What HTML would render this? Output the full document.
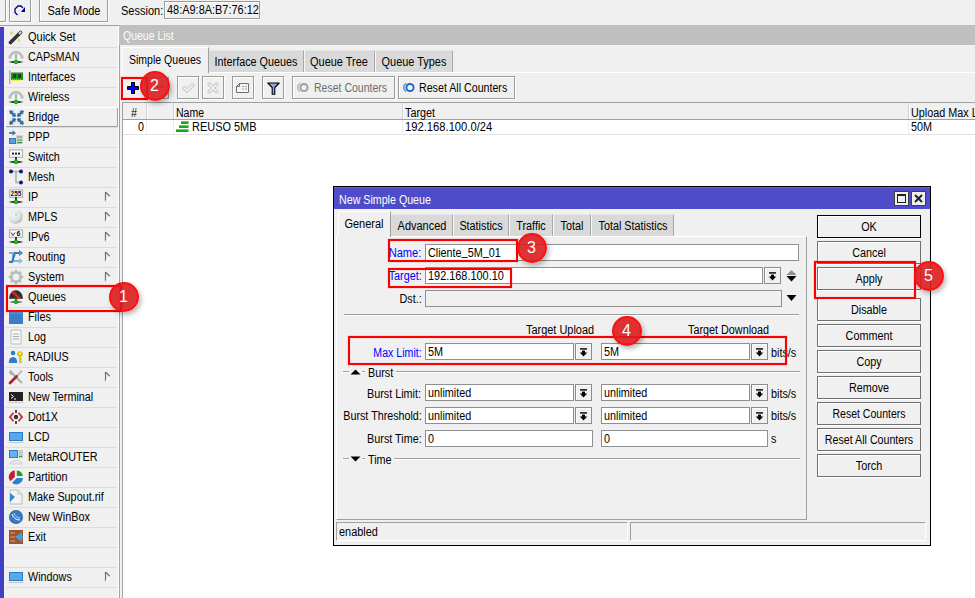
<!DOCTYPE html><html><head><meta charset="utf-8"><style>*{box-sizing:border-box;margin:0;padding:0}
html,body{width:975px;height:598px;overflow:hidden;background:#f0f0f0;font-family:"Liberation Sans",sans-serif;font-size:12px;color:#000;position:relative}
.a{position:absolute}
.x{position:absolute;white-space:nowrap;line-height:13px;font-size:12px;z-index:3}
.btn{position:absolute;border:1px solid #9c9c9c;background:#f0f0f0;box-shadow:inset 1px 1px 0 #fff,1px 1px 0 #fff}
.strip{position:absolute;left:0;top:27px;width:4px;height:571px;background:#4040c0}
.si{position:absolute;left:5px;width:113px;height:20px}
.si:after{content:"";position:absolute;left:1px;right:1px;bottom:-1px;height:1px;background:#dcdcdc}
.si svg{position:absolute;left:3px;top:2px;width:16px;height:16px}
.si svg.arr{position:absolute;left:99px;top:4px;width:8px;height:12px}
.si.hl{border-top:1px solid #fff;border-left:1px solid #fff;box-shadow:inset 0 -1px 0 #a0a0a0, inset -1px 0 0 #a0a0a0}
.si.hl svg{left:2px;top:1px}
.tab{position:absolute;background:#d9d9d9;border-top:1px solid #e4e4e4;border-right:1px solid #a8a8a8}
.tab.gap{border-left:1px solid #f6f6f6}
.tab.act{background:#f0f0f0;border-top:1px solid #fff;border-left:1px solid #fff;border-right:1px solid #a0a0a0;z-index:2}
.fld{position:absolute;background:#fff;border:1px solid #8f8f8f;height:17px}
.fld.dis{background:#f0f0f0}
.dd{position:absolute;width:17px;height:17px;border:1px solid #8c8c8c;background:#f0f0f0;box-shadow:inset 1px 1px 0 #fff}
.dd svg{position:absolute;left:0;top:0}
.dbtn{position:absolute;left:817px;width:104px;height:23px;border:1px solid #707070;background:#f0f0f0;box-shadow:inset 1px 1px 0 #fff,0 1px 0 #fff}
.red{position:absolute;border:2px solid #fa0000;box-shadow:0 0 1px rgba(255,0,0,.55),inset 0 0 1px rgba(255,0,0,.55);z-index:9}
.badge{position:absolute;width:30px;height:30px;border-radius:50%;background:rgba(218,28,30,.9);border:2px solid #ff0f0f;color:#fff;font-size:16px;line-height:25px;text-align:center;box-shadow:2px 3px 5px rgba(0,0,0,.28);z-index:10}
.grp{position:absolute;height:1px;background:#a0a0a0;box-shadow:0 1px 0 #fff}
</style></head><body>
<div class="btn" style="left:-20px;top:-2px;width:26px;height:24px"></div>
<div class="btn" style="left:9px;top:-2px;width:22px;height:24px"></div>
<svg class="a" style="left:13px;top:4px" width="14" height="12" viewBox="0 0 14 12"><path d="M4.5 11 L2 8.5 L2 5 L5 2 L8 2 L10 4" fill="none" stroke="#000090" stroke-width="1.3"/><path d="M12 3 L12 8 L8 8 Z" fill="#000090"/></svg>
<div class="btn" style="left:39px;top:-2px;width:69px;height:24px"></div>
<div class="x" style="top:5px;left:-76.25px;width:300px;text-align:center;transform:scaleX(0.912);transform-origin:50% 0;">Safe Mode</div>
<div class="x" style="top:5px;left:120.5px;transform:scaleX(0.919);transform-origin:0 0;">Session:</div>
<div class="a" style="left:164px;top:1px;width:96px;height:18px;border:1px solid #9a9a9a;background:#f0f0f0;box-shadow:inset 1px 1px 0 #fff,0 1px 0 #fff"></div>
<div class="x" style="top:4px;left:166.5px;transform:scaleX(0.912);transform-origin:0 0;">48:A9:8A:B7:76:12</div>
<div class="a" style="left:0px;top:25px;width:119px;height:1px;background:#a0a0a0"></div>
<div class="strip"></div>
<div class="si" style="top:27px"><svg viewBox="0 0 16 16"><path d="M2.5 13.5 L12.5 3.5" stroke="#333" stroke-width="3.6" stroke-linecap="round"/><path d="M11 5 L13.2 2.8" stroke="#d0d0d0" stroke-width="2.2"/><path d="M3.5 1.5 L4.3 3.4 L6.2 4 L4.3 4.7 L3.5 6.6 L2.8 4.7 L0.9 4 L2.8 3.4Z" fill="#e3e020"/><circle cx="11" cy="11.5" r="1.2" fill="#e3e020"/></svg></div>
<div class="x" style="top:31px;left:27.5px;transform:scaleX(0.916);transform-origin:0 0;">Quick Set</div>
<div class="si" style="top:47px"><svg viewBox="0 0 16 16"><path d="M1.7 9.5 A6.3 6.3 0 0 1 14.3 9.5" fill="none" stroke="#b4bdb8" stroke-width="2.6"/><rect x="7.2" y="5" width="1.6" height="7" fill="#9aa8a2"/><path d="M0.5 13 Q8 11.2 15.5 13 Q8 14.8 0.5 13Z" fill="#111"/><circle cx="8" cy="13" r="2.2" fill="#19b019"/></svg></div>
<div class="x" style="top:51px;left:27.5px;transform:scaleX(0.9);transform-origin:0 0;">CAPsMAN</div>
<div class="si" style="top:67px"><svg viewBox="0 0 16 16"><rect x="1" y="1" width="1.5" height="14" fill="#a8b4ae"/><rect x="3" y="3.5" width="12" height="7.5" fill="#139a13"/><rect x="5" y="5" width="3" height="4" fill="#333"/><rect x="10" y="5" width="3" height="4" fill="#333"/><path d="M4 11 h10" stroke="#e0d000" stroke-width="1.4" stroke-dasharray="1 1"/></svg></div>
<div class="x" style="top:71px;left:27.5px;transform:scaleX(0.9);transform-origin:0 0;">Interfaces</div>
<div class="si" style="top:87px"><svg viewBox="0 0 16 16"><path d="M1.7 9.5 A6.3 6.3 0 0 1 14.3 9.5" fill="none" stroke="#b4bdb8" stroke-width="2.6"/><rect x="7.2" y="5" width="1.6" height="7" fill="#9aa8a2"/><path d="M0.5 13 Q8 11.2 15.5 13 Q8 14.8 0.5 13Z" fill="#111"/><circle cx="8" cy="13" r="2.2" fill="#19b019"/></svg></div>
<div class="x" style="top:91px;left:27.5px;transform:scaleX(0.9);transform-origin:0 0;">Wireless</div>
<div class="si hl" style="top:107px"><svg viewBox="0 0 16 16"><g transform="translate(0.8 0.8)"><path d="M1 1 L6.6 6.6" stroke="#3a6e9e" stroke-width="2.4" stroke-linecap="butt"/><path d="M1 1 L5 1 L1 5Z" fill="#3a6e9e"/><path d="M6.6 6.6 L2.5999999999999996 6.6 L6.6 2.5999999999999996Z" fill="#3a6e9e"/><path d="M14.4 1 L8.8 6.6" stroke="#3a6e9e" stroke-width="2.4" stroke-linecap="butt"/><path d="M14.4 1 L10.4 1 L14.4 5Z" fill="#3a6e9e"/><path d="M8.8 6.6 L12.8 6.6 L8.8 2.5999999999999996Z" fill="#3a6e9e"/><path d="M1 14.4 L6.6 8.8" stroke="#3a6e9e" stroke-width="2.4" stroke-linecap="butt"/><path d="M1 14.4 L5 14.4 L1 10.4Z" fill="#3a6e9e"/><path d="M6.6 8.8 L2.5999999999999996 8.8 L6.6 12.8Z" fill="#3a6e9e"/><path d="M14.4 14.4 L8.8 8.8" stroke="#3a6e9e" stroke-width="2.4" stroke-linecap="butt"/><path d="M14.4 14.4 L10.4 14.4 L14.4 10.4Z" fill="#3a6e9e"/><path d="M8.8 8.8 L12.8 8.8 L8.8 12.8Z" fill="#3a6e9e"/></g></svg></div>
<div class="x" style="top:111px;left:27.5px;transform:scaleX(0.9);transform-origin:0 0;">Bridge</div>
<div class="si" style="top:127px"><svg viewBox="0 0 16 16"><path d="M1 4 h4" stroke="#3b77ad" stroke-width="1.8"/><path d="M4.5 1.2 L8 4 L4.5 6.8Z" fill="#3b77ad"/><rect x="8" y="6" width="7" height="9" fill="#d4d4d4"/><rect x="9" y="7" width="5" height="2" fill="#aaa"/><rect x="9" y="10.5" width="5" height="1.2" fill="#888"/><rect x="9" y="13" width="5" height="1.3" fill="#19b019"/><rect x="1" y="9" width="7" height="6" fill="#3b77ad"/><rect x="2" y="10" width="5" height="4" fill="#5aa0e0"/></svg></div>
<div class="x" style="top:131px;left:27.5px;transform:scaleX(0.9);transform-origin:0 0;">PPP</div>
<div class="si" style="top:147px"><svg viewBox="0 0 16 16"><rect x="1.5" y="0.8" width="13" height="7.5" fill="#fafafa" stroke="#b0b8b4" stroke-width="1.2"/><rect x="4" y="3.6" width="2" height="2" fill="#222"/><rect x="7" y="3.6" width="2" height="2" fill="#222"/><rect x="10" y="3.6" width="2" height="2" fill="#222"/><path d="M0.5 13 Q8 11.2 15.5 13 Q8 14.8 0.5 13Z" fill="#111"/><rect x="7.2" y="8" width="1.6" height="4" fill="#111"/><circle cx="8" cy="13" r="2.3" fill="#19b019"/></svg></div>
<div class="x" style="top:151px;left:27.5px;transform:scaleX(0.9);transform-origin:0 0;">Switch</div>
<div class="si" style="top:167px"><svg viewBox="0 0 16 16"><path d="M3 2.5 H13 M8 2.5 V13.5 H13" fill="none" stroke="#a8b4ae" stroke-width="1.6"/><circle cx="3" cy="2.5" r="2" fill="#12128a"/><circle cx="13" cy="2.5" r="2" fill="#12128a"/><circle cx="13" cy="13.5" r="2" fill="#12128a"/></svg></div>
<div class="x" style="top:171px;left:27.5px;transform:scaleX(0.9);transform-origin:0 0;">Mesh</div>
<div class="si" style="top:187px"><svg viewBox="0 0 16 16"><rect x="1.5" y="0.8" width="13" height="7.5" fill="#fafafa" stroke="#b0b8b4" stroke-width="1.2"/><text x="8" y="7" font-family="Liberation Sans" font-size="6.5" font-weight="bold" text-anchor="middle" fill="#111">255</text><path d="M0.5 13 Q8 11.2 15.5 13 Q8 14.8 0.5 13Z" fill="#111"/><rect x="7.2" y="8" width="1.6" height="4" fill="#111"/><circle cx="8" cy="13" r="2.3" fill="#19b019"/></svg><svg class="arr" width="8" height="12" viewBox="0 0 8 12"><path d="M1.5 1 V10.5" stroke="#707070" stroke-width="1.2"/><path d="M1.5 1 L6 5.5" stroke="#707070" stroke-width="1.1"/><path d="M6 5.5 L1.5 10.5" stroke="#fff" stroke-width="1.1"/></svg></div>
<div class="x" style="top:191px;left:27.5px;transform:scaleX(0.9);transform-origin:0 0;">IP</div>
<div class="si" style="top:207px"><svg viewBox="0 0 16 16"><defs><radialGradient id="mg" cx="0.35" cy="0.3" r="0.8"><stop offset="0" stop-color="#f4f6f5"/><stop offset="0.6" stop-color="#dde2df"/><stop offset="1" stop-color="#a9b5af"/></radialGradient></defs><path d="M5 1.5 H11.5 L14.5 4.5 V9.5 Q13.5 14.5 7.5 14.8 Q1.2 14.5 1.2 8.5 V5.5 Z" fill="url(#mg)"/><circle cx="8" cy="5.5" r="1" fill="#b0b8b4"/></svg><svg class="arr" width="8" height="12" viewBox="0 0 8 12"><path d="M1.5 1 V10.5" stroke="#707070" stroke-width="1.2"/><path d="M1.5 1 L6 5.5" stroke="#707070" stroke-width="1.1"/><path d="M6 5.5 L1.5 10.5" stroke="#fff" stroke-width="1.1"/></svg></div>
<div class="x" style="top:211px;left:27.5px;transform:scaleX(0.9);transform-origin:0 0;">MPLS</div>
<div class="si" style="top:227px"><svg viewBox="0 0 16 16"><rect x="1.5" y="0.8" width="13" height="7.5" fill="#fafafa" stroke="#b0b8b4" stroke-width="1.2"/><path d="M3 3.5 L5 6.5 L7 3.5" fill="none" stroke="#222" stroke-width="0.9"/><text x="10.5" y="7" font-family="Liberation Sans" font-size="7" font-weight="bold" text-anchor="middle" fill="#111">6</text><path d="M0.5 13 Q8 11.2 15.5 13 Q8 14.8 0.5 13Z" fill="#111"/><rect x="7.2" y="8" width="1.6" height="4" fill="#111"/><circle cx="8" cy="13" r="2.3" fill="#19b019"/></svg><svg class="arr" width="8" height="12" viewBox="0 0 8 12"><path d="M1.5 1 V10.5" stroke="#707070" stroke-width="1.2"/><path d="M1.5 1 L6 5.5" stroke="#707070" stroke-width="1.1"/><path d="M6 5.5 L1.5 10.5" stroke="#fff" stroke-width="1.1"/></svg></div>
<div class="x" style="top:231px;left:27.5px;transform:scaleX(0.9);transform-origin:0 0;">IPv6</div>
<div class="si" style="top:247px"><svg viewBox="0 0 16 16"><path d="M1 4 H5 V12 H11" fill="none" stroke="#7fb0d8" stroke-width="2"/><path d="M1 13 H4 L7 4 H11" fill="none" stroke="#3b77ad" stroke-width="2"/><path d="M11 1 L15 4 L11 7Z" fill="#3b77ad"/><path d="M11 9 L15 12 L11 15Z" fill="#8cc0e8"/><circle cx="12" cy="4" r="0.8" fill="#4cf"/></svg><svg class="arr" width="8" height="12" viewBox="0 0 8 12"><path d="M1.5 1 V10.5" stroke="#707070" stroke-width="1.2"/><path d="M1.5 1 L6 5.5" stroke="#707070" stroke-width="1.1"/><path d="M6 5.5 L1.5 10.5" stroke="#fff" stroke-width="1.1"/></svg></div>
<div class="x" style="top:251px;left:27.5px;transform:scaleX(0.9);transform-origin:0 0;">Routing</div>
<div class="si" style="top:267px"><svg viewBox="0 0 16 16"><g fill="none" stroke="#b4bfba"><circle cx="8" cy="8" r="4.6" stroke-width="2.6"/><path d="M8 0.8 V3 M8 13 V15.2 M0.8 8 H3 M13 8 H15.2 M2.9 2.9 L4.5 4.5 M11.5 11.5 L13.1 13.1 M13.1 2.9 L11.5 4.5 M4.5 11.5 L2.9 13.1" stroke-width="2.6"/></g></svg><svg class="arr" width="8" height="12" viewBox="0 0 8 12"><path d="M1.5 1 V10.5" stroke="#707070" stroke-width="1.2"/><path d="M1.5 1 L6 5.5" stroke="#707070" stroke-width="1.1"/><path d="M6 5.5 L1.5 10.5" stroke="#fff" stroke-width="1.1"/></svg></div>
<div class="x" style="top:271px;left:27.5px;transform:scaleX(0.9);transform-origin:0 0;">System</div>
<div class="si" style="top:287px"><svg viewBox="0 0 16 16"><path d="M1 9.7 A7 8.4 0 0 1 15 9.7 Z" fill="#2d2d2d"/><path d="M4.3 2.3 L11.5 9.5" stroke="#d02828" stroke-width="2.6"/><path d="M1 13 Q8 11.5 15 13 Q8 14.6 1 13Z" fill="#111"/><rect x="7.3" y="9.7" width="1.4" height="3" fill="#111"/><circle cx="8" cy="13" r="2.2" fill="#19b019"/></svg></div>
<div class="x" style="top:291px;left:27.5px;transform:scaleX(0.9);transform-origin:0 0;">Queues</div>
<div class="si" style="top:307px"><svg viewBox="0 0 16 16"><path d="M1 1 H6 L8 3 H15 V15 H1Z" fill="#3a7fc8"/><rect x="9" y="3.8" width="5" height="1" fill="#fff"/><path d="M1 1 H6 L8 3 H15 V5 H1Z" fill="#4a90d8"/></svg></div>
<div class="x" style="top:311px;left:27.5px;transform:scaleX(0.9);transform-origin:0 0;">Files</div>
<div class="si" style="top:327px"><svg viewBox="0 0 16 16"><path d="M3 1 H13 V15 H3Z" fill="#f4f6f5" stroke="#b8c2bd" stroke-width="1"/><path d="M5 5 H11 M5 7.5 H11 M5 10 H11" stroke="#a8b4ae" stroke-width="1"/></svg></div>
<div class="x" style="top:331px;left:27.5px;transform:scaleX(0.9);transform-origin:0 0;">Log</div>
<div class="si" style="top:347px"><svg viewBox="0 0 16 16"><circle cx="5" cy="4" r="2.3" fill="#2f7fc8"/><path d="M0.8 14 Q0.8 8 5 8 Q9.2 8 9.2 14Z" fill="#2f7fc8"/><circle cx="12" cy="5" r="2.8" fill="#d6c400"/><circle cx="12" cy="4.5" r="1" fill="#fff"/><path d="M12 7 V14.5 M12 10 H14 M12 12.5 H14" stroke="#d6c400" stroke-width="1.5"/></svg></div>
<div class="x" style="top:351px;left:27.5px;transform:scaleX(0.9);transform-origin:0 0;">RADIUS</div>
<div class="si" style="top:367px"><svg viewBox="0 0 16 16"><path d="M2 2 L14 14" stroke="#a8b4ae" stroke-width="2.2"/><path d="M1 4 Q1 1 4 1 L3 3 L4.5 4.5 L6 3.5 Q6 6.5 3 6" fill="#a8b4ae"/><path d="M14 1.5 L9 7" stroke="#a8b4ae" stroke-width="1.6"/><path d="M2 14 L8.5 7.5" stroke="#c0192c" stroke-width="2.8" stroke-linecap="round"/></svg><svg class="arr" width="8" height="12" viewBox="0 0 8 12"><path d="M1.5 1 V10.5" stroke="#707070" stroke-width="1.2"/><path d="M1.5 1 L6 5.5" stroke="#707070" stroke-width="1.1"/><path d="M6 5.5 L1.5 10.5" stroke="#fff" stroke-width="1.1"/></svg></div>
<div class="x" style="top:371px;left:27.5px;transform:scaleX(0.9);transform-origin:0 0;">Tools</div>
<div class="si" style="top:387px"><svg viewBox="0 0 16 16"><rect x="1" y="3" width="14" height="9" fill="#222"/><path d="M3 5.5 L5.5 7.5 L3 9.5" fill="none" stroke="#fff" stroke-width="1"/><path d="M6 10 H8" stroke="#fff" stroke-width="1"/><rect x="1" y="13" width="14" height="1" fill="#c8ccca"/></svg></div>
<div class="x" style="top:391px;left:27.5px;transform:scaleX(0.9);transform-origin:0 0;">New Terminal</div>
<div class="si" style="top:407px"><svg viewBox="0 0 16 16"><path d="M5 3 L0.8 8 L5 13 L6 11.5 L3.2 8 L6 4.5Z" fill="#c8303c"/><path d="M11 3 L15.2 8 L11 13 L10 11.5 L12.8 8 L10 4.5Z" fill="#c8303c"/><circle cx="8" cy="8" r="2.2" fill="#333"/><path d="M8 1 V4 M8 12 V15" stroke="#222" stroke-width="1.6"/></svg></div>
<div class="x" style="top:411px;left:27.5px;transform:scaleX(0.9);transform-origin:0 0;">Dot1X</div>
<div class="si" style="top:427px"><svg viewBox="0 0 16 16"><rect x="1" y="3" width="14" height="9" fill="#2a7ac8"/><rect x="2" y="4" width="12" height="7" fill="#58a8e8"/><rect x="1" y="13" width="14" height="1" fill="#c0c4c2"/></svg></div>
<div class="x" style="top:431px;left:27.5px;transform:scaleX(0.9);transform-origin:0 0;">LCD</div>
<div class="si" style="top:447px"><svg viewBox="0 0 16 16"><rect x="1" y="1" width="9" height="8" fill="#2a7ac8"/><rect x="2" y="2" width="7" height="6" fill="#6ab0f0"/><rect x="10.5" y="1" width="4.5" height="8" fill="#c8c8c8"/><rect x="11" y="7" width="3" height="1" fill="#19b019"/><path d="M1.5 15 Q3 11.2 8 11.2 Q13 11.2 14.5 15Z" fill="#e4e7e5" stroke="#c8cdca" stroke-width="0.8"/></svg></div>
<div class="x" style="top:451px;left:27.5px;transform:scaleX(0.9);transform-origin:0 0;">MetaROUTER</div>
<div class="si" style="top:467px"><svg viewBox="0 0 16 16"><path d="M6.8 1.5 A6.5 6.5 0 0 0 2.4 12.2 L6.8 8Z" fill="#c02030"/><path d="M8.8 1.5 A6.5 6.5 0 0 1 14.8 7 L8.8 7Z" fill="#20a020"/><path d="M14.8 9 A6.5 6.5 0 0 1 4 13.8 L8.8 9Z" fill="#2a80d0"/></svg></div>
<div class="x" style="top:471px;left:27.5px;transform:scaleX(0.9);transform-origin:0 0;">Partition</div>
<div class="si" style="top:487px"><svg viewBox="0 0 16 16"><path d="M2 1 H10 L14 5 V15 H2Z" fill="#f2f4f3" stroke="#b8c2bd" stroke-width="1"/><path d="M10 1 V5 H14" fill="none" stroke="#b8c2bd" stroke-width="1"/><path d="M2 4 L7 8 L2 13Z" fill="#2a8ad8"/></svg></div>
<div class="x" style="top:491px;left:27.5px;transform:scaleX(0.9);transform-origin:0 0;">Make Supout.rif</div>
<div class="si" style="top:507px"><svg viewBox="0 0 16 16"><circle cx="8" cy="8" r="7" fill="#2f6aaa"/><circle cx="8" cy="8" r="6" fill="#3a7cc0"/><path d="M4 5 Q6 11 12 11" fill="none" stroke="#fff" stroke-width="1"/><path d="M6 4 Q7.5 9 12 9" fill="none" stroke="#cfe0f0" stroke-width="0.8"/></svg></div>
<div class="x" style="top:511px;left:27.5px;transform:scaleX(0.9);transform-origin:0 0;">New WinBox</div>
<div class="si" style="top:527px"><svg viewBox="0 0 16 16"><rect x="1" y="1" width="14" height="14" fill="#a0522d"/><path d="M2.5 4 H7 M2.5 8 H7 M2.5 12 H7" stroke="#e0a070" stroke-width="1.2"/><path d="M14 3 L7 8 L14 13Z" fill="#3aa0e8"/><rect x="13" y="7" width="2" height="2" fill="#3aa0e8"/></svg></div>
<div class="x" style="top:531px;left:27.5px;transform:scaleX(0.9);transform-origin:0 0;">Exit</div>
<div class="si" style="top:547px"></div>
<div class="si" style="top:567px"><svg viewBox="0 0 16 16"><rect x="1" y="3" width="14" height="9" fill="#2a7ac8"/><rect x="2" y="4" width="12" height="7" fill="#58a8e8"/><rect x="1" y="13" width="14" height="1" fill="#c0c4c2"/></svg><svg class="arr" width="8" height="12" viewBox="0 0 8 12"><path d="M1.5 1 V10.5" stroke="#707070" stroke-width="1.2"/><path d="M1.5 1 L6 5.5" stroke="#707070" stroke-width="1.1"/><path d="M6 5.5 L1.5 10.5" stroke="#fff" stroke-width="1.1"/></svg></div>
<div class="x" style="top:571px;left:27.5px;transform:scaleX(0.9);transform-origin:0 0;">Windows</div>
<div class="a" style="left:118px;top:26px;width:1px;height:572px;background:#fff"></div>
<div class="a" style="left:119px;top:25px;width:856px;height:20px;background:#bfbfbf"></div>
<div class="x" style="top:30px;color:#fcfcfc;left:122.5px;transform:scaleX(0.875);transform-origin:0 0;">Queue List</div>
<div class="a" style="left:119px;top:45px;width:1px;height:553px;background:#a0a0a0"></div>
<div class="tab act" style="left:122px;top:47px;width:87px;height:26px"></div>
<div class="tab" style="left:209px;top:50px;width:95px;height:22px"></div>
<div class="tab gap" style="left:304px;top:50px;width:71px;height:22px"></div>
<div class="tab gap" style="left:375px;top:50px;width:78px;height:22px"></div>
<div class="x" style="top:54px;left:15.400000000000006px;width:300px;text-align:center;transform:scaleX(0.878);transform-origin:50% 0;">Simple Queues</div>
<div class="x" style="top:56px;left:106px;width:300px;text-align:center;transform:scaleX(0.9);transform-origin:50% 0;">Interface Queues</div>
<div class="x" style="top:56px;left:189px;width:300px;text-align:center;transform:scaleX(0.913);transform-origin:50% 0;">Queue Tree</div>
<div class="x" style="top:56px;left:264px;width:300px;text-align:center;transform:scaleX(0.91);transform-origin:50% 0;">Queue Types</div>
<div class="a" style="left:122px;top:72px;width:853px;height:1px;background:#fff"></div>
<div class="btn" style="left:122px;top:77px;width:23px;height:22px"></div>
<svg class="a" style="left:127px;top:82px" width="12" height="12" viewBox="0 0 12 12"><path d="M4.5 0.5 H7.5 V4.5 H11.5 V7.5 H7.5 V11.5 H4.5 V7.5 H0.5 V4.5 H4.5Z" fill="#0000ff" stroke="#000" stroke-width="1"/></svg>
<div class="btn" style="left:144px;top:77px;width:25px;height:22px"></div>
<div class="a" style="left:156px;top:86px;width:8px;height:2px;background:#a0a0a0"></div>
<div class="btn" style="left:177px;top:76px;width:22px;height:23px"></div>
<svg class="a" style="left:182px;top:82px" width="13" height="12" viewBox="0 0 13 12"><path d="M0.8 6.5 L2.8 4.5 L5 6.7 L10.2 1.5 L12.2 3.5 L5 10.7Z" fill="none" stroke="#b4b4b4" stroke-width="0.9"/></svg>
<div class="btn" style="left:202px;top:76px;width:22px;height:23px"></div>
<svg class="a" style="left:207px;top:82px" width="12" height="12" viewBox="0 0 12 12"><path d="M0.7 2.5 L2.5 0.7 L6 4.2 L9.5 0.7 L11.3 2.5 L7.8 6 L11.3 9.5 L9.5 11.3 L6 7.8 L2.5 11.3 L0.7 9.5 L4.2 6Z" fill="none" stroke="#b4b4b4" stroke-width="0.9"/></svg>
<div class="btn" style="left:232px;top:76px;width:22px;height:23px"></div>
<svg class="a" style="left:236px;top:82px" width="14" height="12" viewBox="0 0 14 12"><path d="M3.5 1.5 H12.5 V10.5 H0.5 V4.5Z M0.5 4.5 H3.5 V1.5" fill="#f4f4f4" stroke="#707070" stroke-width="1"/><path d="M6 4.5 H8 M9 4.5 H11 M6 7 H8 M9 7 H11" stroke="#909090" stroke-width="0.8"/></svg>
<div class="btn" style="left:262px;top:76px;width:22px;height:23px"></div>
<svg class="a" style="left:267px;top:82px" width="13" height="13" viewBox="0 0 13 13"><path d="M0.8 1 H12.2 L7.8 5.5 V12.2 H5.2 V5.5Z" fill="#8ea8e0" stroke="#000" stroke-width="1.1" stroke-linejoin="round"/></svg>
<div class="btn" style="left:292px;top:76px;width:103px;height:23px"></div>
<svg class="a" style="left:297px;top:82px" width="12" height="11" viewBox="0 0 12 11"><path d="M3.2 1.2 A5 5 0 0 0 3.2 9.8" fill="none" stroke="#b0b0b0" stroke-width="1.3"/><circle cx="7" cy="5.5" r="3.6" fill="none" stroke="#a0a0a0" stroke-width="2"/></svg>
<div class="x" style="top:82px;color:#6d6d6d;left:313.5px;transform:scaleX(0.877);transform-origin:0 0;">Reset Counters</div>
<div class="btn" style="left:398px;top:76px;width:117px;height:23px"></div>
<svg class="a" style="left:403px;top:82px" width="12" height="11" viewBox="0 0 12 11"><path d="M3.2 1.2 A5 5 0 0 0 3.2 9.8" fill="none" stroke="#3a8ad8" stroke-width="1.3"/><circle cx="7" cy="5.5" r="3.6" fill="#fff" stroke="#1a6ac8" stroke-width="2"/></svg>
<div class="x" style="top:82px;left:418.5px;transform:scaleX(0.888);transform-origin:0 0;">Reset All Counters</div>
<div class="a" style="left:122px;top:102px;width:853px;height:496px;background:#fff;border-left:1px solid #a0a0a0"></div>
<div class="a" style="left:123px;top:102px;width:852px;height:18px;background:#f0f0f0;border-top:1px solid #a0a0a0;border-bottom:1px solid #a0a0a0"></div>
<div class="a" style="left:146px;top:103px;width:1px;height:16px;background:#d0d0d0;box-shadow:1px 0 0 #fff"></div>
<div class="a" style="left:146px;top:120px;width:1px;height:14px;background:#ececec"></div>
<div class="a" style="left:173px;top:103px;width:1px;height:16px;background:#d0d0d0;box-shadow:1px 0 0 #fff"></div>
<div class="a" style="left:173px;top:120px;width:1px;height:14px;background:#ececec"></div>
<div class="a" style="left:402px;top:103px;width:1px;height:16px;background:#d0d0d0;box-shadow:1px 0 0 #fff"></div>
<div class="a" style="left:402px;top:120px;width:1px;height:14px;background:#ececec"></div>
<div class="a" style="left:908px;top:103px;width:1px;height:16px;background:#d0d0d0;box-shadow:1px 0 0 #fff"></div>
<div class="a" style="left:908px;top:120px;width:1px;height:14px;background:#ececec"></div>
<div class="a" style="left:123px;top:134px;width:852px;height:1px;background:#e3e3e3"></div>
<div class="x" style="top:107px;left:130.5px;transform:scaleX(0.9);transform-origin:0 0;">#</div>
<div class="x" style="top:107px;left:176px;transform:scaleX(0.877);transform-origin:0 0;">Name</div>
<div class="x" style="top:107px;left:405px;transform:scaleX(0.9);transform-origin:0 0;">Target</div>
<div class="x" style="top:107px;left:911px;transform:scaleX(0.9);transform-origin:0 0;">Upload Max Limit</div>
<div class="x" style="top:121px;left:137.5px;transform:scaleX(0.9);transform-origin:0 0;">0</div>
<svg class="a" style="left:175px;top:120px" width="14" height="13" viewBox="0 0 14 13"><rect x="6" y="1" width="7.5" height="3" fill="#18a818"/><rect x="4" y="5" width="9.5" height="3" fill="#18a818"/><rect x="1" y="9" width="12.5" height="3" fill="#18a818"/><rect x="6" y="1" width="7.5" height="1" fill="#5cd65c"/><rect x="4" y="5" width="9.5" height="1" fill="#5cd65c"/><rect x="1" y="9" width="12.5" height="1" fill="#5cd65c"/></svg>
<div class="x" style="top:121px;left:191.5px;transform:scaleX(0.913);transform-origin:0 0;">REUSO 5MB</div>
<div class="x" style="top:121px;left:405px;transform:scaleX(0.934);transform-origin:0 0;">192.168.100.0/24</div>
<div class="x" style="top:121px;left:911px;transform:scaleX(0.9);transform-origin:0 0;">50M</div>
<div class="a" style="left:333px;top:186px;width:598px;height:360px;background:#f0f0f0;border:1px solid #000"></div>
<div class="a" style="left:334px;top:187px;width:596px;height:22px;background:#4e4cc8;border-top:1px solid #6464dc"></div>
<div class="x" style="top:194px;color:#fff;left:339px;transform:scaleX(0.889);transform-origin:0 0;">New Simple Queue</div>
<div class="a" style="left:894px;top:191px;width:15px;height:15px;background:#f0f0f0;border:1px solid #404040"></div>
<div class="a" style="left:897px;top:194px;width:9px;height:9px;border:1px solid #202020;border-top-width:2px"></div>
<div class="a" style="left:911px;top:191px;width:15px;height:15px;background:#f0f0f0;border:1px solid #404040"></div>
<svg class="a" style="left:914px;top:194px" width="9" height="9" viewBox="0 0 9 9"><path d="M1 1L8 8M8 1L1 8" stroke="#202020" stroke-width="2"/></svg>
<div class="tab act" style="left:338px;top:211px;width:53px;height:26px"></div>
<div class="tab" style="left:391px;top:214px;width:62px;height:22px"></div>
<div class="tab gap" style="left:453px;top:214px;width:56px;height:22px"></div>
<div class="tab gap" style="left:509px;top:214px;width:44px;height:22px"></div>
<div class="tab gap" style="left:553px;top:214px;width:38px;height:22px"></div>
<div class="tab gap" style="left:591px;top:214px;width:83px;height:22px"></div>
<div class="x" style="top:218px;left:214px;width:300px;text-align:center;transform:scaleX(0.915);transform-origin:50% 0;">General</div>
<div class="x" style="top:220px;left:271.5px;width:300px;text-align:center;transform:scaleX(0.915);transform-origin:50% 0;">Advanced</div>
<div class="x" style="top:220px;left:331px;width:300px;text-align:center;transform:scaleX(0.9);transform-origin:50% 0;">Statistics</div>
<div class="x" style="top:220px;left:381.4px;width:300px;text-align:center;transform:scaleX(0.9);transform-origin:50% 0;">Traffic</div>
<div class="x" style="top:220px;left:422.4px;width:300px;text-align:center;transform:scaleX(0.9);transform-origin:50% 0;">Total</div>
<div class="x" style="top:220px;left:482.79999999999995px;width:300px;text-align:center;transform:scaleX(0.9);transform-origin:50% 0;">Total Statistics</div>
<div class="a" style="left:336px;top:236px;width:471px;height:284px;border-left:1px solid #fff;border-top:1px solid #fff;border-right:1px solid #a0a0a0;border-bottom:1px solid #a0a0a0"></div>
<div class="x" style="top:247px;color:#0000ff;right:553.5px;transform:scaleX(0.925);transform-origin:100% 0;text-align:right;">Name:</div>
<div class="fld" style="left:425px;top:244px;width:374px"></div>
<div class="x" style="top:247px;left:428px;transform:scaleX(0.9);transform-origin:0 0;">Cliente<span style="position:relative;top:-2px">_</span>5M<span style="position:relative;top:-2px">_</span>01</div>
<div class="x" style="top:270px;color:#0000ff;right:553.5px;transform:scaleX(0.9);transform-origin:100% 0;text-align:right;">Target:</div>
<div class="fld" style="left:425px;top:267px;width:338px"></div>
<div class="x" style="top:270px;left:428px;transform:scaleX(0.909);transform-origin:0 0;">192.168.100.10</div>
<div class="dd" style="left:764px;top:267px"><svg width="15" height="15" viewBox="0 0 15 15"><rect x="4" y="4.2" width="7" height="1.4" fill="#000"/><rect x="6" y="6.6" width="3" height="2.4" fill="#000"/><path d="M3.8 8.6 H11.2 L7.5 12.4Z" fill="#000"/></svg></div>
<svg class="a" style="left:786px;top:269px" width="11" height="14" viewBox="0 0 11 14"><path d="M0.5 6 L5.5 1 L10.5 6Z" fill="#8a948a"/><path d="M0.5 7 L5.5 12.5 L10.5 7Z" fill="#000"/></svg>
<div class="x" style="top:293px;right:553.5px;transform:scaleX(0.9);transform-origin:100% 0;text-align:right;">Dst.:</div>
<div class="fld dis" style="left:425px;top:290px;width:357px"></div>
<svg class="a" style="left:786px;top:294px" width="11" height="8" viewBox="0 0 11 8"><path d="M0.5 1 L5.5 7 L10.5 1Z" fill="#000"/></svg>
<div class="grp" style="left:344px;top:314px;width:455px"></div>
<div class="x" style="top:324px;left:525.5px;transform:scaleX(0.911);transform-origin:0 0;">Target Upload</div>
<div class="x" style="top:324px;right:206px;transform:scaleX(0.9);transform-origin:100% 0;text-align:right;">Target Download</div>
<div class="x" style="top:347px;color:#0000ff;right:553.5px;transform:scaleX(0.885);transform-origin:100% 0;text-align:right;">Max Limit:</div>
<div class="fld" style="left:425px;top:343px;width:149px"></div>
<div class="x" style="top:346px;left:428px;transform:scaleX(0.9);transform-origin:0 0;">5M</div>
<div class="dd" style="left:575px;top:343px"><svg width="15" height="15" viewBox="0 0 15 15"><rect x="4" y="4.2" width="7" height="1.4" fill="#000"/><rect x="6" y="6.6" width="3" height="2.4" fill="#000"/><path d="M3.8 8.6 H11.2 L7.5 12.4Z" fill="#000"/></svg></div>
<div class="fld" style="left:601px;top:343px;width:149px"></div>
<div class="x" style="top:346px;left:604px;transform:scaleX(0.9);transform-origin:0 0;">5M</div>
<div class="dd" style="left:751px;top:343px"><svg width="15" height="15" viewBox="0 0 15 15"><rect x="4" y="4.2" width="7" height="1.4" fill="#000"/><rect x="6" y="6.6" width="3" height="2.4" fill="#000"/><path d="M3.8 8.6 H11.2 L7.5 12.4Z" fill="#000"/></svg></div>
<div class="x" style="top:347px;left:770.5px;transform:scaleX(0.9);transform-origin:0 0;">bits/s</div>
<div class="grp" style="left:343px;top:371px;width:6px"></div>
<svg class="a" style="left:350px;top:369px" width="11" height="6" viewBox="0 0 11 6"><path d="M0.5 5.5 L5.5 0.5 L10.5 5.5Z" fill="#000"/></svg>
<div class="grp" style="left:362px;top:371px;width:3px"></div>
<div class="x" style="top:367px;left:368px;transform:scaleX(0.9);transform-origin:0 0;">Burst</div>
<div class="grp" style="left:396px;top:371px;width:404px"></div>
<div class="x" style="top:388px;right:553.5px;transform:scaleX(0.9);transform-origin:100% 0;text-align:right;">Burst Limit:</div>
<div class="fld" style="left:425px;top:384px;width:149px"></div>
<div class="x" style="top:387px;left:428px;transform:scaleX(0.9);transform-origin:0 0;">unlimited</div>
<div class="dd" style="left:575px;top:384px"><svg width="15" height="15" viewBox="0 0 15 15"><rect x="4" y="4.2" width="7" height="1.4" fill="#000"/><rect x="6" y="6.6" width="3" height="2.4" fill="#000"/><path d="M3.8 8.6 H11.2 L7.5 12.4Z" fill="#000"/></svg></div>
<div class="fld" style="left:601px;top:384px;width:149px"></div>
<div class="x" style="top:387px;left:604px;transform:scaleX(0.9);transform-origin:0 0;">unlimited</div>
<div class="dd" style="left:751px;top:384px"><svg width="15" height="15" viewBox="0 0 15 15"><rect x="4" y="4.2" width="7" height="1.4" fill="#000"/><rect x="6" y="6.6" width="3" height="2.4" fill="#000"/><path d="M3.8 8.6 H11.2 L7.5 12.4Z" fill="#000"/></svg></div>
<div class="x" style="top:388px;left:770.5px;transform:scaleX(0.9);transform-origin:0 0;">bits/s</div>
<div class="x" style="top:410px;right:553.5px;transform:scaleX(0.894);transform-origin:100% 0;text-align:right;">Burst Threshold:</div>
<div class="fld" style="left:425px;top:407px;width:149px"></div>
<div class="x" style="top:410px;left:428px;transform:scaleX(0.9);transform-origin:0 0;">unlimited</div>
<div class="dd" style="left:575px;top:407px"><svg width="15" height="15" viewBox="0 0 15 15"><rect x="4" y="4.2" width="7" height="1.4" fill="#000"/><rect x="6" y="6.6" width="3" height="2.4" fill="#000"/><path d="M3.8 8.6 H11.2 L7.5 12.4Z" fill="#000"/></svg></div>
<div class="fld" style="left:601px;top:407px;width:149px"></div>
<div class="x" style="top:410px;left:604px;transform:scaleX(0.9);transform-origin:0 0;">unlimited</div>
<div class="dd" style="left:751px;top:407px"><svg width="15" height="15" viewBox="0 0 15 15"><rect x="4" y="4.2" width="7" height="1.4" fill="#000"/><rect x="6" y="6.6" width="3" height="2.4" fill="#000"/><path d="M3.8 8.6 H11.2 L7.5 12.4Z" fill="#000"/></svg></div>
<div class="x" style="top:410px;left:770.5px;transform:scaleX(0.9);transform-origin:0 0;">bits/s</div>
<div class="x" style="top:433px;right:553.5px;transform:scaleX(0.9);transform-origin:100% 0;text-align:right;">Burst Time:</div>
<div class="fld" style="left:425px;top:430px;width:168px"></div>
<div class="x" style="top:433px;left:428px;transform:scaleX(0.9);transform-origin:0 0;">0</div>
<div class="fld" style="left:601px;top:430px;width:167px"></div>
<div class="x" style="top:433px;left:604px;transform:scaleX(0.9);transform-origin:0 0;">0</div>
<div class="x" style="top:433px;left:770.5px;transform:scaleX(0.9);transform-origin:0 0;">s</div>
<div class="grp" style="left:343px;top:458px;width:6px"></div>
<svg class="a" style="left:350px;top:456px" width="11" height="6" viewBox="0 0 11 6"><path d="M0.5 0.5 L5.5 5.5 L10.5 0.5Z" fill="#000"/></svg>
<div class="grp" style="left:362px;top:458px;width:3px"></div>
<div class="x" style="top:454px;left:368px;transform:scaleX(0.9);transform-origin:0 0;">Time</div>
<div class="grp" style="left:394px;top:458px;width:406px"></div>
<div class="dbtn" style="top:215px;border-color:#000"></div>
<div class="x" style="top:221px;left:719px;width:300px;text-align:center;transform:scaleX(0.9);transform-origin:50% 0;">OK</div>
<div class="dbtn" style="top:241px"></div>
<div class="x" style="top:247px;left:719px;width:300px;text-align:center;transform:scaleX(0.9);transform-origin:50% 0;">Cancel</div>
<div class="dbtn" style="top:267px"></div>
<div class="x" style="top:273px;left:719px;width:300px;text-align:center;transform:scaleX(0.9);transform-origin:50% 0;">Apply</div>
<div class="dbtn" style="top:298px"></div>
<div class="x" style="top:304px;left:719px;width:300px;text-align:center;transform:scaleX(0.9);transform-origin:50% 0;">Disable</div>
<div class="dbtn" style="top:324px"></div>
<div class="x" style="top:330px;left:719px;width:300px;text-align:center;transform:scaleX(0.9);transform-origin:50% 0;">Comment</div>
<div class="dbtn" style="top:350px"></div>
<div class="x" style="top:356px;left:719px;width:300px;text-align:center;transform:scaleX(0.9);transform-origin:50% 0;">Copy</div>
<div class="dbtn" style="top:376px"></div>
<div class="x" style="top:382px;left:719px;width:300px;text-align:center;transform:scaleX(0.9);transform-origin:50% 0;">Remove</div>
<div class="dbtn" style="top:402px"></div>
<div class="x" style="top:408px;left:719px;width:300px;text-align:center;transform:scaleX(0.877);transform-origin:50% 0;">Reset Counters</div>
<div class="dbtn" style="top:428px"></div>
<div class="x" style="top:434px;left:719px;width:300px;text-align:center;transform:scaleX(0.888);transform-origin:50% 0;">Reset All Counters</div>
<div class="dbtn" style="top:454px"></div>
<div class="x" style="top:460px;left:719px;width:300px;text-align:center;transform:scaleX(0.9);transform-origin:50% 0;">Torch</div>
<div class="a" style="left:336px;top:522px;width:292px;height:19px;border-left:1px solid #a0a0a0;border-top:1px solid #a0a0a0;border-right:1px solid #fff;border-bottom:1px solid #fff"></div>
<div class="x" style="top:526px;left:338.5px;transform:scaleX(0.91);transform-origin:0 0;">enabled</div>
<div class="a" style="left:630px;top:522px;width:296px;height:19px;border-left:1px solid #a0a0a0;border-top:1px solid #a0a0a0;border-right:1px solid #fff;border-bottom:1px solid #fff"></div>
<div class="red" style="left:121px;top:77px;width:27px;height:23px"></div>
<div class="badge" style="left:139.5px;top:70.8px">2</div>
<div class="red" style="left:5.7px;top:285.4px;width:116px;height:26.2px"></div>
<div class="badge" style="left:108.5px;top:281.5px">1</div>
<div class="red" style="left:388px;top:239px;width:130px;height:23px"></div>
<div class="badge" style="left:516.5px;top:232.5px">3</div>
<div class="red" style="left:388px;top:268.4px;width:124px;height:19.6px"></div>
<div class="red" style="left:348.3px;top:335.5px;width:438.7px;height:29.5px"></div>
<div class="badge" style="left:611.5px;top:315.5px">4</div>
<div class="red" style="left:814px;top:261px;width:102px;height:38px"></div>
<div class="badge" style="left:913.5px;top:260.5px">5</div>
</body></html>
